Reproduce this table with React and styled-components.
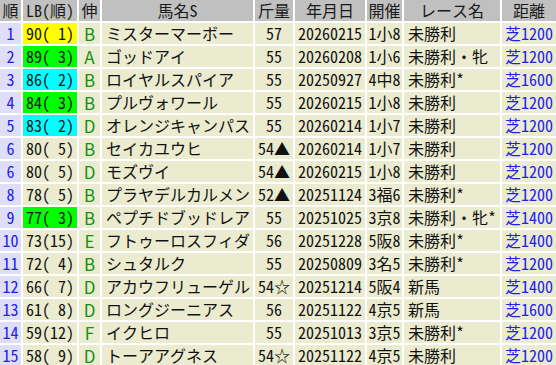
import React from "react";
import styled, { createGlobalStyle } from "styled-components";

const Global = createGlobalStyle`
  html, body {
    margin: 0;
    padding: 0;
    background: #ffffff;
  }
`;

const Table = styled.div`
  display: grid;
  grid-template-columns: 21px 54px 21px 151px 38px 70px 35px 96px 54px;
  grid-auto-rows: 21px;
  gap: 2px;
  width: 556px;
  font-family: "Noto Sans Mono CJK JP", "Noto Sans CJK JP", monospace;
  font-size: 16px;
  line-height: 21px;
  color: #111;
`;

const Head = styled.div`
  background: #c0c0c0;
  text-align: center;
  white-space: nowrap;
  color: #1a1a1a;
`;

const Cell = styled.div`
  background: ${(p) => p.$bg || "#ebebcf"};
  color: ${(p) => p.$color || "#111"};
  text-align: ${(p) => p.$align || "left"};
  padding-left: ${(p) => p.$pad || 0}px;
  white-space: pre;
`;

// 伸 letters are drawn in the proportional face
const Grade = styled(Cell)`
  font-family: "Noto Sans CJK JP", sans-serif;
  font-size: 17px;
`;

const heads = ["順", "LB(順)", "伸", "馬名S", "斤量", "年月日", "開催", "レース名", "距離"];

const lbColors = {
  yellow: "#ffff00",
  lime: "#00ff00",
  cyan: "#00ffff",
};

const rows = [
  ["1", "90( 1)", "yellow", "B", "ミスターマーボー", "57", "20260215", "1小8", "未勝利", "芝1200"],
  ["2", "89( 3)", "lime", "A", "ゴッドアイ", "55", "20260208", "1小6", "未勝利・牝", "芝1200"],
  ["3", "86( 2)", "cyan", "B", "ロイヤルスパイア", "55", "20250927", "4中8", "未勝利*", "芝1600"],
  ["4", "84( 3)", "lime", "B", "プルヴォワール", "55", "20260215", "1小8", "未勝利", "芝1200"],
  ["5", "83( 2)", "cyan", "D", "オレンジキャンパス", "55", "20260214", "1小7", "未勝利", "芝1200"],
  ["6", "80( 5)", null, "B", "セイカユウヒ", "54▲", "20260214", "1小7", "未勝利", "芝1200"],
  ["6", "80( 5)", null, "D", "モズヴイ", "54▲", "20260215", "1小8", "未勝利", "芝1200"],
  ["8", "78( 5)", null, "B", "プラヤデルカルメン", "52▲", "20251124", "3福6", "未勝利*", "芝1200"],
  ["9", "77( 3)", "lime", "B", "ペプチドブッドレア", "55", "20251025", "3京8", "未勝利・牝*", "芝1400"],
  ["10", "73(15)", null, "E", "フトゥーロスフィダ", "56", "20251228", "5阪8", "未勝利*", "芝1400"],
  ["11", "72( 4)", null, "B", "シュタルク", "55", "20250809", "3名5", "未勝利*", "芝1200"],
  ["12", "66( 7)", null, "D", "アカウフリューゲル", "54☆", "20251214", "5阪4", "新馬", "芝1400"],
  ["13", "61( 8)", null, "D", "ロングジーニアス", "56", "20251122", "4京5", "新馬", "芝1600"],
  ["14", "59(12)", null, "F", "イクヒロ", "55", "20251013", "3京5", "未勝利*", "芝1200"],
  ["15", "58( 9)", null, "D", "トーアアグネス", "54☆", "20251122", "4京5", "未勝利", "芝1200"],
];

export default function App() {
  return (
    <>
      <Global />
      <Table>
        {heads.map((h) => (
          <Head key={h}>{h}</Head>
        ))}
        {rows.map((r, i) => (
          <React.Fragment key={i}>
            <Cell $bg="#dedef8" $color="#2020ee" $align="center">{r[0]}</Cell>
            <Cell $bg={lbColors[r[2]]} $pad={3}>{r[1]}</Cell>
            <Grade $color="#129012" $align="center">{r[3]}</Grade>
            <Cell $pad={4}>{r[4]}</Cell>
            <Cell $align="center">{r[5]}</Cell>
            <Cell $align="center">{r[6]}</Cell>
            <Cell $align="center">{r[7]}</Cell>
            <Cell $pad={4}>{r[8]}</Cell>
            <Cell $color="#2020ee" $pad={3}>{r[9]}</Cell>
          </React.Fragment>
        ))}
      </Table>
    </>
  );
}
